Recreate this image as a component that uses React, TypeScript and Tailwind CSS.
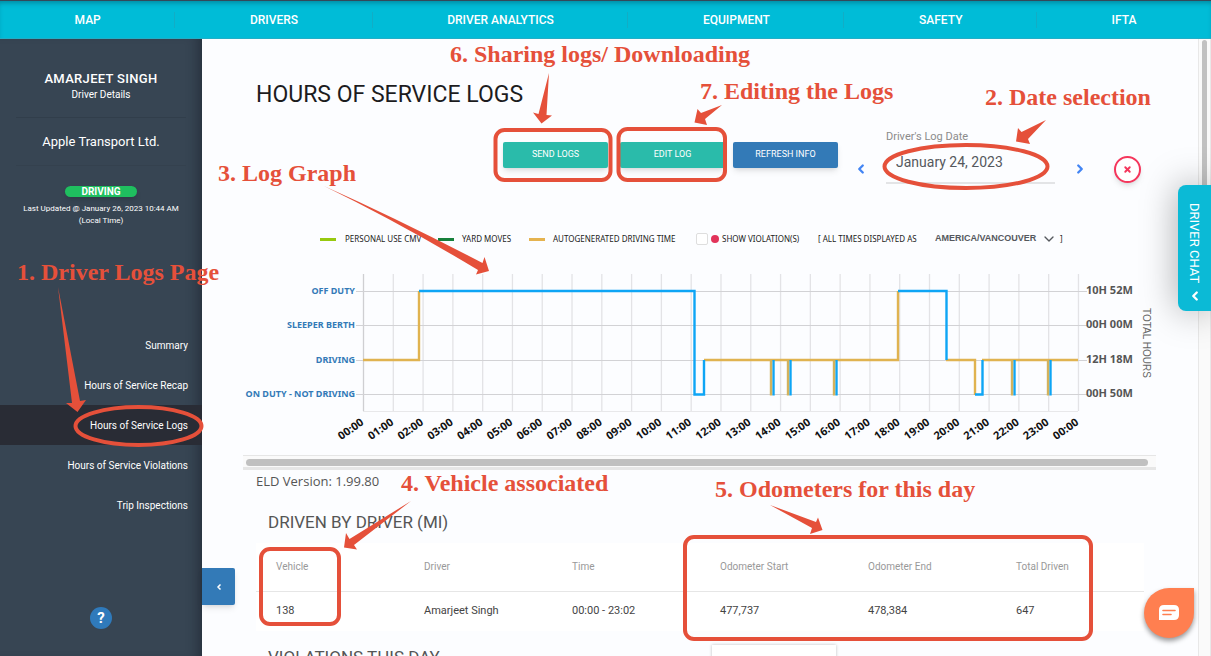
import React from "react";
import { ChevronDown, ChevronLeft, ChevronRight, X } from "lucide-react";

const navItems = ["MAP", "DRIVERS", "DRIVER ANALYTICS", "EQUIPMENT", "SAFETY", "IFTA"];

const sideLinks = [
  "Summary",
  "Hours of Service Recap",
  "Hours of Service Logs",
  "Hours of Service Violations",
  "Trip Inspections",
];

const statusRows = [
  { label: "OFF DUTY", total: "10H 52M", y: 291 },
  { label: "SLEEPER BERTH", total: "00H 00M", y: 325 },
  { label: "DRIVING", total: "12H 18M", y: 360 },
  { label: "ON DUTY - NOT DRIVING", total: "00H 50M", y: 394 },
];

const driven = [
  ["Vehicle", "138"],
  ["Driver", "Amarjeet Singh"],
  ["Time", "00:00 - 23:02"],
  ["Odometer Start", "477,737"],
  ["Odometer End", "478,384"],
  ["Total Driven", "647"],
];

// short on-duty stops: [x of the driving edge, x of the on-duty edge]
const stops = [
  [771, 773],
  [788, 790],
  [834, 836],
  [1012, 1014],
  [1048, 1050],
];

const notes = [
  { text: "1. Driver Logs Page", place: "left-[17px] top-[260px]" },
  { text: "2. Date selection", place: "left-[985px] top-[85px]" },
  { text: "3. Log Graph", place: "left-[218px] top-[161px]" },
  { text: "4. Vehicle associated", place: "left-[401px] top-[471px]" },
  { text: "5. Odometers for this day", place: "left-[715px] top-[477px]" },
  { text: "6. Sharing logs/ Downloading", place: "left-[450px] top-[42px]" },
  { text: "7. Editing the Logs", place: "left-[700px] top-[79px]" },
];

function TopNav() {
  return (
    <nav className="relative z-10 flex h-[39px] shrink-0 border-t border-b border-t-[#33495a] border-b-[#22aec6] bg-[#00bcd7] shadow-[inset_0_4px_5px_-2px_rgba(0,60,80,0.4)]">
      {navItems.map((item, i) => (
        <a
          key={item}
          href="#"
          className="relative flex flex-auto items-center justify-center text-[12px] font-medium text-white"
        >
          {item}
          {i < navItems.length - 1 && <span className="absolute right-0 h-4 w-px bg-[#12adc5]" />}
        </a>
      ))}
    </nav>
  );
}

function Sidebar() {
  return (
    <aside className="relative flex w-[202px] shrink-0 flex-col bg-[#374553] text-white shadow-[inset_-12px_0_12px_-8px_rgba(20,25,35,0.45)]">
      <div className="mx-4 flex h-[79px] flex-col items-center border-b border-[#313e4b] pt-8 text-center">
        <h2 className="text-[13px] leading-4 font-medium tracking-wide">AMARJEET SINGH</h2>
        <p className="text-[10px] leading-4">Driver Details</p>
      </div>
      <div className="mx-4 flex h-12 items-center justify-center border-b border-[#34414e] text-[13px]">
        Apple Transport Ltd.
      </div>
      <div className="flex flex-col items-center pt-5 text-center">
        <span className="w-[72px] rounded-full bg-[#1fbf5f] text-[10px] leading-[11px] font-bold shadow-md">
          DRIVING
        </span>
        <p className="mt-[6px] text-[8px] leading-3">
          Last Updated @ January 26, 2023 10:44 AM
          <br />
          (Local Time)
        </p>
      </div>
      <ul className="mt-[98px]">
        {sideLinks.map((link) => (
          <li key={link}>
            <a
              href="#"
              className={
                link === "Hours of Service Logs"
                  ? "flex h-10 items-center justify-end bg-[#292c35] pr-[14px] text-[10px]"
                  : "flex h-10 items-center justify-end pr-[14px] text-[10px]"
              }
            >
              {link}
            </a>
          </li>
        ))}
      </ul>
      <button
        type="button"
        aria-label="Help"
        className="mx-auto mt-[82px] size-[22px] rounded-full bg-[#2f7abb] text-[15px] leading-none font-bold"
      >
        ?
      </button>
      <button
        type="button"
        aria-label="Collapse menu"
        className="absolute top-[529px] left-full z-10 flex h-[37px] w-[33px] items-center justify-center rounded-r-xs bg-[#337ab7] shadow-md"
      >
        <ChevronLeft className="size-2" strokeWidth={5} />
      </button>
    </aside>
  );
}

function Toolbar() {
  return (
    <div className="mt-[18px] flex items-start text-[9px] text-white">
      <div className="ml-auto flex gap-3 pt-[13px]">
        <button type="button" className="h-[26px] w-[105px] rounded-xs bg-[#2abbaa] shadow-md">
          SEND LOGS
        </button>
        <div className="flex gap-2">
          <button type="button" className="h-[26px] w-[105px] rounded-xs bg-[#2abbaa] shadow-md">
            EDIT LOG
          </button>
          <button type="button" className="h-[26px] w-[105px] rounded-xs bg-[#337ab7] shadow-md">
            REFRESH INFO
          </button>
        </div>
      </div>
      <button type="button" aria-label="Previous day" className="mt-[33px] ml-4 text-[#4285f4]">
        <ChevronLeft className="size-[14px]" strokeWidth={4} />
      </button>
      <div className="ml-[18px] w-[169px] border-b-2 border-[#e3e4e6]">
        <label htmlFor="log-date" className="block text-[11px] leading-4 text-[#8b8b8b]">
          Driver's Log Date
        </label>
        <input
          id="log-date"
          defaultValue="January 24, 2023"
          className="block h-[37px] w-full pb-[3px] pl-[10px] text-[14px] text-[#55585d] outline-none"
        />
      </div>
      <button type="button" aria-label="Next day" className="mt-[33px] ml-[18px] text-[#4285f4]">
        <ChevronRight className="size-[14px]" strokeWidth={4} />
      </button>
      <button
        type="button"
        aria-label="Close"
        className="mt-[27px] mr-[57px] ml-[27px] flex size-[27px] items-center justify-center rounded-full border-2 border-[#f5365c] bg-white text-[#f5365c] shadow-md"
      >
        <X className="size-[9px]" strokeWidth={5} />
      </button>
    </div>
  );
}

function Legend() {
  return (
    <div className="mt-[45px] ml-[118px] flex h-5 items-center font-['Noto_Sans'] text-[8px] text-[#222]">
      <span className="mr-[9px] h-[3px] w-4 bg-[#97c90f]" />
      <span className="w-[93px]">PERSONAL USE CMV</span>
      <span className="mr-2 h-[3px] w-4 bg-[#16803b]" />
      <span className="w-[67px]">YARD MOVES</span>
      <span className="mr-2 h-[3px] w-4 bg-[#e5b34f]" />
      <span className="w-[143px]">AUTOGENERATED DRIVING TIME</span>
      <label className="flex w-[122px] items-center">
        <input
          type="checkbox"
          className="mr-[3px] size-3 appearance-none rounded-xs border border-[#dedede] bg-white"
        />
        <span className="mr-[3px] size-2 rounded-full bg-[#e2335a]" />
        SHOW VIOLATION(S)
      </label>
      <label htmlFor="timezone" className="w-[117px]">
        [ ALL TIMES DISPLAYED AS
      </label>
      <span className="relative flex items-center">
        <select
          id="timezone"
          className="w-[122px] appearance-none font-['Liberation_Sans'] text-[9px] font-bold text-[#55585d] outline-none"
        >
          <option>AMERICA/VANCOUVER</option>
        </select>
        <ChevronDown className="pointer-events-none absolute right-0 size-4 text-[#55585d]" strokeWidth={2} />
      </span>
      <span className="ml-[3px]">]</span>
    </div>
  );
}

function LogGraph() {
  const hours = Array.from({ length: 25 }, (_, h) => ({
    x: 363.5 + h * 29.79,
    label: String(h % 24).padStart(2, "0") + ":00",
  }));

  return (
    <svg viewBox="243 249 913 206" className="block h-[206px] w-[913px] max-w-none" role="img" aria-label="Log graph">
      {hours.map(({ x }, i) => (
        <line key={i} x1={x} x2={x} y1="274" y2="411" stroke={i === 0 ? "#cfcfd2" : "#e3e3e6"} strokeWidth="1.3" />
      ))}
      <line x1="363" x2="1078" y1="411.5" y2="411.5" stroke="#e8e8ea" />
      {statusRows.map((row) => (
        <g key={row.label}>
          <line x1="356" x2="1087" y1={row.y + 0.5} y2={row.y + 0.5} stroke="#d2d2d5" />
          <text
            x="355"
            y={row.y + 3}
            textAnchor="end"
            fontSize="9"
            fontWeight="700"
            fill="#337ab7"
            className="font-['Noto_Sans']"
          >
            {row.label}
          </text>
          <text x="1086" y={row.y + 3} fontSize="11" fontWeight="700" fill="#555" className="font-['Noto_Sans']">
            {row.total}
          </text>
        </g>
      ))}
      {hours.map(({ x, label }, i) => (
        <text
          key={i}
          transform={`translate(${x + 1} 424) rotate(-35)`}
          textAnchor="end"
          fontSize="11"
          fontWeight="700"
          fill="#111"
          className="font-['Noto_Sans']"
        >
          {label}
        </text>
      ))}
      <text
        transform="translate(1143 308) rotate(90)"
        fontSize="10"
        fill="#666"
        className="font-['Liberation_Sans']"
      >
        TOTAL HOURS
      </text>
      <g fill="none" strokeWidth="2.4">
        <path d="M363 360H419V291M704 360H898V291M946 360H975V395M982 360H1078" stroke="#e0b350" />
        <path
          d="M419 291H694.5V394.5H704V360M898 291H946.5V360M975 394.5H982.5V360"
          stroke="#0ea5f5"
        />
        {stops.map(([from, to]) => (
          <g key={from}>
            <path d={`M${to + 0.5} 360V395.5`} stroke="#0ea5f5" />
            <path d={`M${from} 360V395.5`} stroke="#d3b25c" />
          </g>
        ))}
      </g>
    </svg>
  );
}

function DrivenTable() {
  return (
    <section className="mr-[54px] ml-[54px]">
      <h2 className="ml-3 text-[17px] leading-6 text-[#555]">DRIVEN BY DRIVER (MI)</h2>
      <table className="mt-[9px] w-full table-fixed bg-white text-left">
        <thead>
          <tr className="h-12 border-b border-[#e6e6e6] text-[10px] text-[#999]">
            {driven.map(([head]) => (
              <th key={head} className="pl-5 font-normal">
                {head}
              </th>
            ))}
          </tr>
        </thead>
        <tbody>
          <tr className="h-10 text-[11px] text-[#444]">
            {driven.map(([head, value]) => (
              <td key={head} className="pl-5">
                {value}
              </td>
            ))}
          </tr>
        </tbody>
      </table>
      <div className="mt-[14px] ml-3 flex items-start">
        <h2 className="w-[444px] text-[17px] leading-6 text-[#555]">VIOLATIONS THIS DAY</h2>
        <input aria-label="Search violations" className="h-8 w-[124px] bg-white shadow-[0_0_3px_rgba(0,0,0,0.25)]" />
      </div>
    </section>
  );
}

function Annotations() {
  return (
    <div className="pointer-events-none absolute inset-0 z-30 overflow-hidden">
      <svg viewBox="0 0 1211 656" className="absolute top-0 left-0 h-[656px] w-[1211px] max-w-none">
        <g fill="none" stroke="#e5503a" strokeWidth="4">
          <rect x="495.5" y="130" width="115" height="50" rx="9" />
          <rect x="618.5" y="129" width="106.5" height="51" rx="9" />
          <rect x="261" y="549" width="78" height="75" rx="9" />
          <rect x="685" y="537" width="406" height="102" rx="9" />
          <ellipse cx="966" cy="166.5" rx="81.5" ry="21.5" />
          <ellipse cx="138.5" cy="426" rx="63" ry="19" />
        </g>
        <g fill="#e5503a">
          <path d="M58 287L80 401L86 400L77.5 412L66 403L72 403Z" />
          <path d="M1046 120L1028 139L1030 144L1016 141.5L1018 128L1021.500 132Z" />
          <path d="M324 186Q400 220 482.500 263L484.500 257L489 271L476 274.500L478 270Q400 223 324 186Z" />
          <path d="M411 501L354 545L357 549.500L344 547.500L346 533L349.500 539Z" />
          <path d="M770 505L816 522L818 517.500L822.500 530L810 534L812 528Z" />
          <path d="M549 73L546.500 115L552 115.500L541.500 123.500L533 112.500L538.500 114Z" />
          <path d="M722 105L705 119L707 125L694.500 122.500L697.500 109L701 113Z" />
        </g>
      </svg>
      {notes.map((note) => (
        <p
          key={note.text}
          className={`absolute font-['Liberation_Serif'] text-[24px] leading-6 font-bold whitespace-nowrap text-[#e5503a] ${note.place}`}
        >
          {note.text}
        </p>
      ))}
    </div>
  );
}

export default function App() {
  return (
    <div className="relative flex h-screen flex-col overflow-hidden bg-[#fcfdff] font-[Roboto,sans-serif]">
      <TopNav />
      <div className="flex min-h-0 flex-1">
        <Sidebar />
        <main className="min-w-0 flex-1 overflow-hidden">
          <h1 className="mt-10 ml-[54px] text-[23px] leading-8 text-[#1c1c1e]">HOURS OF SERVICE LOGS</h1>
          <Toolbar />
          <Legend />
          <div className="ml-[41px] overflow-hidden">
            <LogGraph />
          </div>
          <div className="mr-[42px] ml-[41px] h-[15px] border-t border-b-3 border-[#e6e6e6] bg-[#fafafa] px-[3px] pt-[3px]">
            <div className="mr-[5px] h-[7px] rounded-full bg-[#c0c0c0]" />
          </div>
          <p className="mt-px mb-[19px] ml-[54px] font-['Open_Sans'] text-[13px] leading-5 text-[#555]">
            ELD Version: 1.99.80
          </p>
          <DrivenTable />
        </main>
        <div className="w-[13px] shrink-0 border-x border-[#e8e8e8] bg-[#fafafa] px-[3px] pt-px">
          <div className="h-[180px] rounded-full bg-[#c1c1c1]" />
        </div>
      </div>
      <button
        type="button"
        className="absolute top-[185px] right-0 z-20 flex h-[126px] w-[33px] flex-col items-center justify-end gap-1.5 rounded-l-lg bg-[#0bbad6] pb-2 text-[13px] text-white shadow-[0_0_36px_rgba(0,0,0,0.35)]"
      >
        <span className="whitespace-nowrap [writing-mode:vertical-rl]">DRIVER CHAT</span>
        <ChevronLeft className="size-[14px]" strokeWidth={4} />
      </button>
      <button
        type="button"
        aria-label="Open chat"
        className="absolute top-[588px] right-[17px] z-20 flex size-[50px] items-center justify-center rounded-full rounded-tr-sm bg-[#ff7f50] shadow-[0_3px_5px_rgba(0,0,0,0.4)]"
      >
        <svg viewBox="0 0 20 16" className="h-4 w-5">
          <path d="M5 0H15Q20 0 20 5V10Q20 15 15 15H0V5Q0 0 5 0Z" fill="#fff" />
          <path d="M4 5.500H16M4 9.500H12" stroke="#ff7f50" strokeWidth="1.600" strokeLinecap="round" />
        </svg>
      </button>
      <Annotations />
    </div>
  );
}
